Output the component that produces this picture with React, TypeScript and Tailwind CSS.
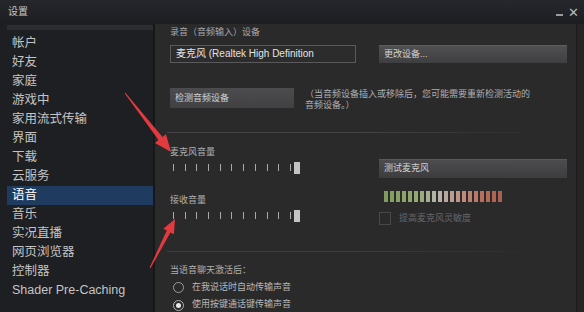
import React from "react";

const items = [
  "帐户",
  "好友",
  "家庭",
  "游戏中",
  "家用流式传输",
  "界面",
  "下载",
  "云服务",
  "语音",
  "音乐",
  "实况直播",
  "网页浏览器",
  "控制器",
  "Shader Pre-Caching",
];

const meterColors = [
  "#7f9a5e", "#83a062", "#86a266", "#8aa46a", "#8ea66e", "#94a874", "#9aaa7c",
  "#a6ae92", "#b0b2a4", "#b6b0a8", "#b8a6a0", "#bb9c94", "#bc9488", "#bd8a7c",
  "#bc8070", "#ba7866", "#b8705e", "#b46a58", "#b06454", "#ac5e50",
];

function Slider() {
  return (
    <div className="flex items-center h-[12px]">
      <div className="pl-[3px]">
        <div className="w-[118px] flex justify-between items-center">
          {Array.from({ length: 11 }).map((_, i) => (
            <div key={i} className="w-[1px] h-[7px] bg-[#a9a9a9]" />
          ))}
        </div>
      </div>
      <div className="ml-[3px] w-[6px] h-[12px] bg-[#c4c4c4]" />
    </div>
  );
}

export default function App() {
  return (
    <div className="relative w-[584px] h-[312px] overflow-hidden flex flex-col bg-[#1e1f22] font-['Liberation_Sans','Noto_Sans_CJK_SC',sans-serif]">
      {/* title bar */}
      <div className="h-[24px] flex items-center justify-between pl-[8px] pr-[5px] bg-gradient-to-b from-[#25272d] to-[#1d1e22]">
        <span className="text-[10px] text-[#c6c6c6] leading-none">设置</span>
        <div className="flex items-center gap-[5px] text-[#b8b8b8]">
          <div className="w-[7px] h-[2px] bg-[#9a9a9a] mt-[5px]" />
          <span className="text-[13px] leading-none">✕</span>
        </div>
      </div>
      <div className="flex flex-1 min-h-0">
        {/* sidebar */}
        <div className="w-[153px] bg-[#1e1f22] pl-[7px] pt-[1px]">
          <div className="h-[5px] bg-[#2c2d31]" />
          <div className="mt-[3.5px]">
            {items.map((it) => (
              <div
                key={it}
                className={
                  it === "语音"
                    ? "h-[19px] leading-[19px] pl-[5px] text-[12.5px] text-white bg-[#1f3c60]"
                    : "h-[19px] leading-[19px] pl-[5px] text-[12.5px] text-[#c4c4c4]"
                }
              >
                {it}
              </div>
            ))}
          </div>
        </div>
        <div className="w-[2px] bg-[#161719]" />
        {/* content */}
        <div className="w-[421px] bg-[#2a2a2b] pl-[15px] pr-[9px] flex flex-col">
          <div className="mt-[2px] h-[12px] leading-[12px] text-[9px] text-[#a8a8a8]">录音（音频输入）设备</div>
          <div className="mt-[7px] flex">
            <div className="w-[186px] h-[18px] border border-[#5a5a5c] bg-[#2c2c2d] pl-[5px] text-[10px] leading-[16px] text-[#e4e4e4] whitespace-nowrap overflow-hidden">
              麦克风 (Realtek High Definition
            </div>
            <div className="ml-[23px] w-[188px] h-[18px] bg-gradient-to-b from-[#505052] to-[#3f3f41] border-t border-[#5c5c5e] pl-[5px] text-[9px] leading-[16px] text-[#d2d2d2]">
              更改设备...
            </div>
          </div>
          <div className="mt-[25px] flex">
            <div className="w-[124px] h-[20px] bg-gradient-to-b from-[#4c4c4e] to-[#414143] pl-[5px] text-[9px] leading-[20px] text-[#d2d2d2]">
              检测音频设备
            </div>
            <div className="ml-[11px] text-[9px] leading-[11px] text-[#b0b0b0] pt-[1px]">
              <div>（当音频设备插入或移除后，您可能需要重新检测活动的</div>
              <div>音频设备。）</div>
            </div>
          </div>
          <div className="mt-[21px] -ml-[3px] w-[353px] h-[1px] bg-gradient-to-r from-[#464648] via-[#464648] to-[#2f2f30]" />
          {/* middle */}
          <div className="h-[122px] flex">
            <div className="w-[186px]">
              <div className="mt-[13px] h-[12px] leading-[12px] text-[9px] text-[#b0b0b0]">麦克风音量</div>
              <div className="mt-[4px]"><Slider /></div>
              <div className="mt-[20px] h-[12px] leading-[12px] text-[9px] text-[#b0b0b0]">接收音量</div>
              <div className="mt-[4px]"><Slider /></div>
            </div>
            <div className="ml-[23px] w-[188px]">
              <div className="mt-[26px] h-[19px] bg-gradient-to-b from-[#4c4c4e] to-[#3d3d3f] border-t border-[#58585a] pl-[5px] text-[9px] leading-[17px] text-[#d2d2d2]">
                测试麦克风
              </div>
              <div className="mt-[13px] ml-[5px] h-[11px] flex gap-[2px]">
                {meterColors.map((c, i) => (
                  <div key={i} className="w-[4px] h-[11px]" style={{ backgroundColor: c }} />
                ))}
              </div>
              <div className="mt-[10px] flex items-center">
                <div className="w-[12px] h-[13px] border border-[#48484a]" />
                <span className="ml-[8px] text-[9px] text-[#666668]">提高麦克风灵敏度</span>
              </div>
            </div>
          </div>
          <div className="-ml-[3px] w-[353px] h-[1px] bg-gradient-to-r from-[#3e3e40] via-[#3e3e40] to-[#2d2d2e]" />
          <div className="mt-[12px] h-[12px] leading-[12px] text-[9px] text-[#b0b0b0]">当语音聊天激活后：</div>
          <div className="mt-[5px] h-[14px] flex items-center">
            <div className="ml-[3px] w-[11px] h-[11px] rounded-full border border-[#9a9a9a]" />
            <span className="ml-[8px] text-[9px] text-[#b8b8b8]">在我说话时自动传输声音</span>
          </div>
          <div className="mt-[4px] h-[14px] flex items-center">
            <div className="ml-[3px] w-[11px] h-[11px] rounded-full border border-[#b0b0b0] flex items-center justify-center">
              <div className="w-[5px] h-[5px] rounded-full bg-[#e8e8e8]" />
            </div>
            <span className="ml-[8px] text-[9px] text-[#b8b8b8]">使用按键通话键传输声音</span>
          </div>
        </div>
        <div className="w-[8px] bg-[#252526] border-l border-[#1b1b1c]" />
      </div>
      {/* red arrows overlay */}
      <svg className="absolute inset-0 pointer-events-none" width="584" height="312" viewBox="0 0 584 312">
        <polygon
          fill="#e23a3e"
          points="124.6,93.3 125.4,92.7 162.5,137.1 166,134.3 171,152 155,142.9 158.5,140.1"
        />
        <polygon
          fill="#e23a3e"
          points="149.5,267.7 150.5,268.3 170.4,232.4 173.9,234.2 175,219 163.3,228.8 166.8,230.6"
        />
      </svg>
    </div>
  );
}
